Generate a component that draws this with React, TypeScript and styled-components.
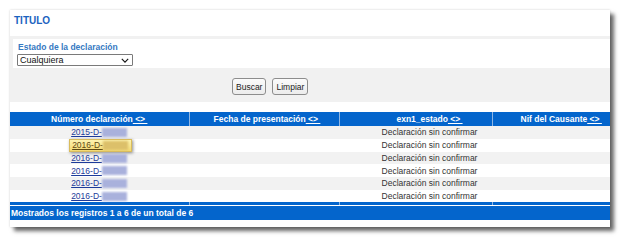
import React from "react"
import styled, { createGlobalStyle } from "styled-components"

const GlobalStyle = createGlobalStyle`
  body {
    margin: 0;
    background: #ffffff;
    font-family: "Liberation Sans", Arial, sans-serif;
  }
`

const rows = [
  { num: "2015-D-", estado: "Declaración sin confirmar" },
  { num: "2016-D-", estado: "Declaración sin confirmar", hover: true },
  { num: "2016-D-", estado: "Declaración sin confirmar" },
  { num: "2016-D-", estado: "Declaración sin confirmar" },
  { num: "2016-D-", estado: "Declaración sin confirmar" },
  { num: "2016-D-", estado: "Declaración sin confirmar" },
]

const columns = [
  { label: "Número declaración", width: 179, shift: 0 },
  { label: "Fecha de presentación", width: 150, shift: 6 },
  { label: "exn1_estado", width: 153, shift: 28 },
  { label: "Nif del Causante", width: 118, shift: 20 },
]

// listado de declaraciones
const App = () => {
  return (
    <Page>
      <GlobalStyle />
      <Card>
        <TitleBar>TITULO</TitleBar>
        <FilterPanel>
          <FilterBox>
            <FieldLabel>Estado de la declaración</FieldLabel>
            <SelectWrap>
              <Select defaultValue="any">
                <option value="any">Cualquiera</option>
              </Select>
              <Chevron viewBox="0 0 10 6">
                <path d="M1 1l4 4 4-4" fill="none" stroke="#111" strokeWidth="1.4" />
              </Chevron>
            </SelectWrap>
          </FilterBox>
          <ButtonRow>
            <Button>Buscar</Button>
            <Button>Limpiar</Button>
          </ButtonRow>
        </FilterPanel>
        <Table>
          <colgroup>
            {columns.map((c) => (
              <col key={c.label} style={{ width: c.width }} />
            ))}
          </colgroup>
          <thead>
            <tr>
              {columns.map((c) => (
                <HeadCell key={c.label} $shift={c.shift}>
                  {c.label}
                  <SortLink>{"\u00a0<>\u00a0"}</SortLink>
                </HeadCell>
              ))}
            </tr>
          </thead>
          <tbody>
            {rows.map((r, i) => (
              <Row key={i} $odd={i % 2 === 0}>
                <Cell>
                  {r.hover ? (
                    <Highlight>
                      <NumLink $hover>{r.num}</NumLink>
                      <Redacted $hover />
                    </Highlight>
                  ) : (
                    <NumWrap>
                      <NumLink>{r.num}</NumLink>
                      <Redacted />
                    </NumWrap>
                  )}
                </Cell>
                <Cell />
                <Cell $shift={28}>{r.estado}</Cell>
                <Cell />
              </Row>
            ))}
            <FootRow>
              <FootCell />
              <FootCell />
              <FootCell />
              <FootCell />
            </FootRow>
          </tbody>
        </Table>
        <InfoBar>Mostrados los registros 1 a 6 de un total de 6</InfoBar>
      </Card>
    </Page>
  )
}

export default App

const Page = styled.div`
  padding: 10px 11px 8px 10px;
  width: 621px;
  height: 240px;
  box-sizing: border-box;
`

const Card = styled.div`
  width: 600px;
  height: 217px;
  background: #ffffff;
  box-shadow: 4px 4px 4px rgba(0, 0, 0, 0.6), 0 0 2px rgba(0, 0, 0, 0.18);
  display: flex;
  flex-direction: column;
  overflow: hidden;
`

const TitleBar = styled.div`
  height: 26px;
  padding: 5px 0 0 4px;
  box-sizing: border-box;
  font-size: 10px;
  line-height: 12px;
  font-weight: bold;
  color: #1b63c0;
`

const FilterPanel = styled.div`
  background: #f1f1f1;
  padding: 3px 0 0 3px;
  height: 66px;
  box-sizing: border-box;
  margin-bottom: 10px;
`

const FilterBox = styled.div`
  background: #ffffff;
  height: 29px;
  padding: 3px 0 0 5px;
  box-sizing: border-box;
`

const FieldLabel = styled.div`
  font-size: 8.5px;
  font-weight: bold;
  line-height: 10px;
  color: #3579c2;
`

const SelectWrap = styled.div`
  position: relative;
  width: 116px;
  height: 12px;
  margin: 2px 0 0 -1px;
`

const Select = styled.select`
  display: block;
  box-sizing: border-box;
  appearance: none;
  width: 116px;
  height: 12px;
  margin: 0;
  padding: 0 0 0 2px;
  border: 1px solid #7a7a7a;
  border-radius: 1px;
  background: #ffffff;
  font-family: "Liberation Sans", Arial, sans-serif;
  font-size: 9px;
  line-height: 10px;
  color: #111;
`

const Chevron = styled.svg`
  position: absolute;
  right: 4px;
  top: 4px;
  width: 8px;
  height: 5px;
  pointer-events: none;
`

const ButtonRow = styled.div`
  height: 34px;
  box-sizing: border-box;
  padding: 3px 0 0 219px;
  display: flex;
  align-items: center;
  gap: 6px;
`

const Button = styled.button`
  height: 17px;
  padding: 0 3px;
  border: 1px solid #8d8d8d;
  border-radius: 3px;
  background: linear-gradient(#fbfbfb, #ececec);
  font-family: "Liberation Sans", Arial, sans-serif;
  font-size: 8.5px;
  color: #222;
`

const Table = styled.table`
  width: 600px;
  border-collapse: collapse;
  table-layout: fixed;
`

const HeadCell = styled.th<{ $shift: number }>`
  height: 14px;
  padding: 0 0 0 ${(p) => p.$shift}px;
  background: #0465cc;
  border-right: 1px solid #8fb6e4;
  color: #ffffff;
  font-size: 8.5px;
  font-weight: bold;
  text-align: center;
  white-space: nowrap;
  &:last-child {
    border-right: none;
  }
`

const SortLink = styled.span`
  text-decoration: underline;
`

const Row = styled.tr<{ $odd: boolean }>`
  background: ${(p) => (p.$odd ? "#f2f2f2" : "#ffffff")};
`

const Cell = styled.td<{ $shift?: number }>`
  height: 12.7px;
  padding: 0 0 0 ${(p) => p.$shift ?? 0}px;
  font-size: 8.5px;
  color: #333333;
  text-align: center;
  white-space: nowrap;
  line-height: 10px;
`

const NumWrap = styled.span`
  display: inline-flex;
  align-items: center;
  height: 12px;
  padding-right: 1px;
`

const Highlight = styled.span`
  display: inline-flex;
  align-items: center;
  height: 11px;
  padding: 0 3px 0 2px;
  margin-left: 2px;
  background: linear-gradient(#fdf3b0, #f3d972);
  border: 1px solid #d9bc5c;
  box-shadow: 1px 1px 3px rgba(0, 0, 0, 0.45);
`

const NumLink = styled.a<{ $hover?: boolean }>`
  color: ${(p) => (p.$hover ? "#5e4a14" : "#1e3b9a")};
  text-decoration: underline;
  font-size: 8.5px;
`

const Redacted = styled.span<{ $hover?: boolean }>`
  display: inline-block;
  width: 25px;
  height: 9px;
  background: ${(p) => (p.$hover ? "#dcc06a" : "#a9b1dc")};
  filter: blur(0.8px);
`

const FootRow = styled.tr`
  background: #0465cc;
`

const FootCell = styled.td`
  height: 3px;
  padding: 0;
  border-right: 1px solid #8fb6e4;
  border-bottom: 1px solid #ffffff;
  &:last-child {
    border-right: none;
  }
`

const InfoBar = styled.div`
  height: 14px;
  background: #0465cc;
  color: #ffffff;
  font-size: 8.5px;
  font-weight: bold;
  line-height: 14px;
  padding-left: 1px;
`
